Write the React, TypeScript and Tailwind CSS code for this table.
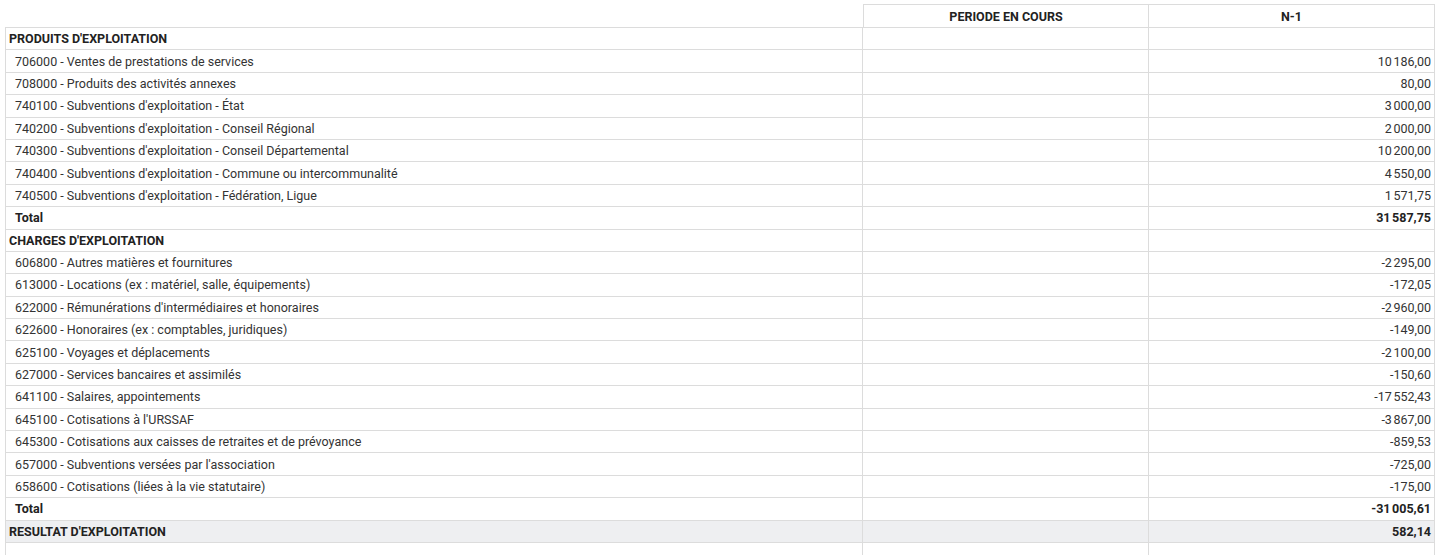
import React from "react";

type Row = { kind: "section" | "item" | "total" | "result" | "empty"; label: string; value?: string };

const N = "\u202f";

const rows: Row[] = [
  { kind: "section", label: "PRODUITS D'EXPLOITATION" },
  { kind: "item", label: "706000 - Ventes de prestations de services", value: `10${N}186,00` },
  { kind: "item", label: "708000 - Produits des activités annexes", value: "80,00" },
  { kind: "item", label: "740100 - Subventions d'exploitation - État", value: `3${N}000,00` },
  { kind: "item", label: "740200 - Subventions d'exploitation - Conseil Régional", value: `2${N}000,00` },
  { kind: "item", label: "740300 - Subventions d'exploitation - Conseil Départemental", value: `10${N}200,00` },
  { kind: "item", label: "740400 - Subventions d'exploitation - Commune ou intercommunalité", value: `4${N}550,00` },
  { kind: "item", label: "740500 - Subventions d'exploitation - Fédération, Ligue", value: `1${N}571,75` },
  { kind: "total", label: "Total", value: `31${N}587,75` },
  { kind: "section", label: "CHARGES D'EXPLOITATION" },
  { kind: "item", label: "606800 - Autres matières et fournitures", value: `-2${N}295,00` },
  { kind: "item", label: "613000 - Locations (ex : matériel, salle, équipements)", value: "-172,05" },
  { kind: "item", label: "622000 - Rémunérations d'intermédiaires et honoraires", value: `-2${N}960,00` },
  { kind: "item", label: "622600 - Honoraires (ex : comptables, juridiques)", value: "-149,00" },
  { kind: "item", label: "625100 - Voyages et déplacements", value: `-2${N}100,00` },
  { kind: "item", label: "627000 - Services bancaires et assimilés", value: "-150,60" },
  { kind: "item", label: "641100 - Salaires, appointements", value: `-17${N}552,43` },
  { kind: "item", label: "645100 - Cotisations à l'URSSAF", value: `-3${N}867,00` },
  { kind: "item", label: "645300 - Cotisations aux caisses de retraites et de prévoyance", value: "-859,53" },
  { kind: "item", label: "657000 - Subventions versées par l'association", value: "-725,00" },
  { kind: "item", label: "658600 - Cotisations (liées à la vie statutaire)", value: "-175,00" },
  { kind: "total", label: "Total", value: `-31${N}005,61` },
  { kind: "result", label: "RESULTAT D'EXPLOITATION", value: "582,14" },
  { kind: "empty", label: "" },
];

function DataRow({ row }: { row: Row }) {
  const bold = row.kind !== "item" && row.kind !== "empty";
  const bg = row.kind === "result" ? "bg-[#eeeff1]" : "bg-white";
  const pad = row.kind === "section" || row.kind === "result" ? "pl-[3px]" : "pl-[9px]";
  const weight = bold ? "font-bold text-[#222]" : "font-normal text-[#333]";
  return (
    <div className={`grid grid-cols-[60%_20%_20%] h-[22.4px] ${bg}`}>
      <div className={`flex items-center border-l border-b border-r border-[#dcdcdc] ${pad} ${weight} truncate`}>
        {row.label}
      </div>
      <div className="border-b border-r border-[#dcdcdc]" />
      <div className={`flex items-center justify-end pr-[3px] border-b border-r border-[#dcdcdc] ${weight}`}>
        {row.value ?? ""}
      </div>
    </div>
  );
}

export default function App() {
  return (
    <div
      className="w-[1440px] h-[555px] overflow-hidden bg-white pt-[4px] px-[5px] text-[12.5px] leading-[15px]"
      style={{ fontFamily: "Roboto, 'Liberation Sans', Arial, sans-serif" }}
    >
      <div className="grid grid-cols-[60%_20%_20%] h-[24px]">
        <div className="border-b border-[#dcdcdc]" />
        <div className="flex items-center justify-center border-t border-l border-r border-b border-[#dcdcdc] font-bold text-[#222]">
          PERIODE EN COURS
        </div>
        <div className="flex items-center justify-center border-t border-r border-b border-[#dcdcdc] font-bold text-[#222]">
          N-1
        </div>
      </div>
      {rows.map((r, i) => (
        <DataRow key={i} row={r} />
      ))}
    </div>
  );
}
